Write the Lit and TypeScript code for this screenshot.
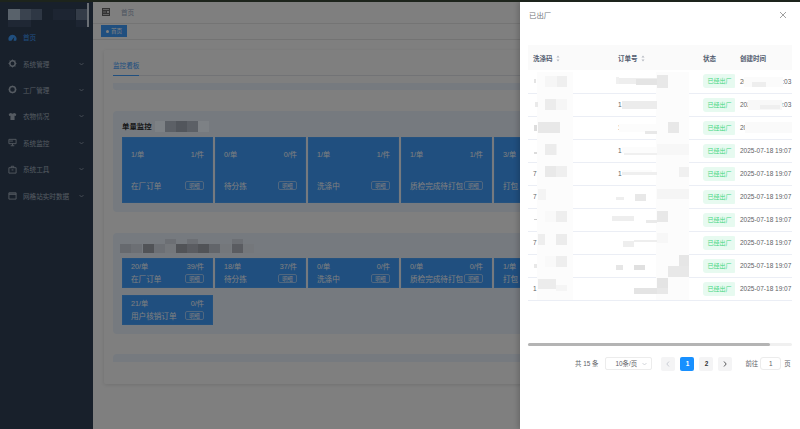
import { LitElement, html, css, svg } from "lit";
import { customElement } from "lit/decorators.js";

type Patch = [number, number, number, number, string];

const menu = [
  { label: "首页", icon: "home", active: true },
  { label: "系统管理", icon: "gear" },
  { label: "工厂管理", icon: "ring" },
  { label: "衣物情况", icon: "shirt" },
  { label: "系统监控", icon: "monitor" },
  { label: "系统工具", icon: "tool" },
  { label: "网格站实时数据", icon: "window" },
];

const topCards = [
  ["1/单", "1/件", "在厂订单"],
  ["0/单", "0/件", "待分拣"],
  ["1/单", "1/件", "洗涤中"],
  ["1/单", "1/件", "质检完成待打包"],
  ["3/单", "", "打包"],
];
const lowCards = [
  ["20/单", "39/件", "在厂订单"],
  ["18/单", "37/件", "待分拣"],
  ["0/单", "0/件", "洗涤中"],
  ["0/单", "0/件", "质检完成待打包"],
  ["1/单", "", "打包"],
  ["21/单", "0/件", "用户核销订单"],
];

const rows = [
  { a: "", b: "", t: "2025-07-18 19:03" },
  { a: "", b: "1", t: "2025-07-18 19:03" },
  { a: "", b: "1", t: "2025-07-18 19:07" },
  { a: "", b: "1", t: "2025-07-18 19:07" },
  { a: "7", b: "1", t: "2025-07-18 19:07" },
  { a: "7", b: "", t: "2025-07-18 19:07" },
  { a: "", b: "", t: "2025-07-18 19:07" },
  { a: "7", b: "", t: "2025-07-18 19:07" },
  { a: "", b: "", t: "2025-07-18 19:07" },
  { a: "1", b: "", t: "2025-07-18 19:07" },
];

const W = "#fcfcfc";
const patches: Patch[] = [
  // logo
  [8, 9, 12, 11, "#59626b"], [20, 9, 11, 11, "#3a434f"], [31, 9, 11, 11, "#2e3744"],
  [8, 20, 23, 7, "#1f2734"], [53, 9, 22, 11, "#1d2532"], [76, 9, 11, 11, "#343c48"], [76, 20, 11, 7, "#1d2532"],
  [87, 3, 2, 24, "#6a6f75"],
  // panel one heading
  [155, 121, 10, 11, "#7d8185"], [165, 121, 11, 11, "#5c6066"], [176, 121, 11, 11, "#52565c"],
  [187, 121, 11, 11, "#5c6066"], [198, 121, 11, 11, "#7d8185"],
  // panel two heading
  [120, 244, 11, 9, "#66696e"], [131, 244, 11, 9, "#6c6f74"], [143, 244, 11, 9, "#515357"],
  [154, 244, 11, 9, "#6c6f74"], [165, 244, 11, 9, "#74777b"], [165, 239, 11, 5, "#6c6f74"],
  [176, 244, 11, 9, "#515357"], [187, 244, 11, 9, "#5a5c61"], [187, 239, 11, 5, "#6c6f74"],
  [198, 244, 11, 9, "#515357"], [209, 244, 11, 9, "#62656a"], [220, 244, 11, 9, "#74777b"],
  [232, 244, 11, 9, "#5a5c61"], [232, 239, 11, 5, "#6c6f74"], [243, 244, 11, 9, "#74777b"],
  // drawer masks
  [537, 72, 36, 228, W], [656, 72, 33, 228, W],
  [545, 76, 12, 11, "#f6f6f6"], [557, 76, 10, 11, "#efefef"],
  [534, 79, 2, 4, "#e4e4e4"],
  [535, 102, 3, 5, "#eaeaea"],
  [545, 99, 11, 11, "#ececec"], [556, 99, 11, 11, "#f6f6f6"],
  [534, 125, 3, 6, "#dddddd"],
  [538, 122, 22, 11, "#e8e8e8"],
  [534, 152, 3, 2, "#dcdcdc"],
  [545, 144, 12, 11, "#f4f4f4"], [545, 144, 11, 11, "#ececec"],
  [545, 166, 11, 11, "#e9e9e9"], [556, 166, 11, 11, "#efefef"],
  [538, 189, 8, 11, "#f4f4f4"],
  [534, 219, 3, 1, "#cfcfcf"],
  [556, 211, 11, 11, "#eeeeee"], [545, 211, 11, 11, "#f9f9f9"],
  [538, 234, 7, 11, "#eeeeee"], [556, 234, 11, 11, "#ececec"],
  [534, 264, 3, 4, "#e8e8e8"],
  [556, 256, 11, 11, "#eeeeee"], [545, 256, 11, 11, "#f9f9f9"],
  [538, 279, 18, 10, "#ececec"], [556, 285, 11, 6, "#f5f5f5"],
  [616, 77, 3, 7, "#f0f0f0"], [619, 78, 38, 6, "#eeeeee"], [636, 79, 21, 6, "#e4e4e4"], [657, 75, 11, 13, "#e8e8e8"],
  [622, 101, 35, 8, "#ececec"], [619, 124, 38, 8, W], [645, 131, 12, 3, "#e8e8e8"], [668, 122, 11, 11, "#e8e8e8"],
  [622, 147, 35, 6, W], [624, 153, 33, 2, "#f0f0f0"], [657, 144, 32, 11, "#f7f7f7"],
  [622, 170, 30, 2, W], [622, 172, 35, 3, "#efefef"], [679, 167, 10, 10, "#f0f0f0"],
  [635, 194, 11, 7, "#e8e8e8"], [616, 197, 8, 3, "#eeeeee"], [657, 189, 32, 10, "#f5f5f5"],
  [612, 216, 22, 5, "#eeeeee"], [646, 220, 11, 3, "#eaeaea"], [657, 211, 11, 11, "#e8e8e8"],
  [623, 241, 11, 6, "#eeeeee"], [634, 240, 23, 2, "#eeeeee"], [657, 233, 11, 10, "#f7f7f7"],
  [616, 265, 7, 5, "#e6e6e6"], [634, 265, 11, 5, "#e0e0e0"], [679, 255, 10, 11, "#e6e6e6"], [668, 266, 21, 11, "#e8e8e8"],
  [634, 288, 23, 6, "#e4e4e4"], [657, 278, 11, 12, "#e4e4e4"], [657, 288, 11, 6, "#e8e8e8"],
  // obscured creation dates
  [744, 77, 39, 10, "#fbfbfb"], [752, 82, 14, 5, "#eeeeee"],
  [748, 100, 34, 10, "#f8f8f8"], [760, 105, 20, 4, "#efefef"],
  [745, 122, 47, 11, "#fafafa"],
];

function icon(name: string) {
  switch (name) {
    case "home":
      return svg`<path d="M1 8.500a4.500 4.500 0 1 1 8 0H6.200L7 4.500 4.600 7.600 3.800 8.500z" fill="currentColor"/>`;
    case "gear":
      return svg`<circle cx="5" cy="5" r="3" fill="none" stroke="currentColor" stroke-width="1.700"/><path d="M5 .6v1.400M5 8v1.400M.6 5H2M8 5h1.400M1.900 1.900l1 1M7.100 7.100l1 1M8.100 1.900l-1 1M2.900 7.100l-1 1" stroke="currentColor"/>`;
    case "ring":
      return svg`<circle cx="5" cy="5" r="3.400" fill="none" stroke="currentColor" stroke-width="1.700"/><path d="M5 .8v1M5 8.200v1M.8 5h1M8.200 5h1" stroke="currentColor"/>`;
    case "shirt":
      return svg`<path d="M3 1 .8 2.200l.6 2.200 1.300-.3V9h4.600V4.100l1.300.3.600-2.200L7 1 5 2z" fill="currentColor"/>`;
    case "monitor":
      return svg`<path d="M1 1.500h8v4.800H1z" fill="none" stroke="currentColor"/><path d="M5 6.300v2M3 8.600h4M1.500 3.400h4" stroke="currentColor"/>`;
    case "tool":
      return svg`<path d="M1 3h8v6H1zM3.600 3V1.400h2.800V3" fill="none" stroke="currentColor"/><path d="M4 5.500h2" stroke="currentColor"/>`;
    default:
      return svg`<path d="M1 2h8v7H1z" fill="none" stroke="currentColor"/><path d="M1 3.500h8" stroke="currentColor" stroke-width="1.400"/>`;
  }
}

@customElement("app-root")
export class AppRoot extends LitElement {
  static styles = css`
    :host {
      display: block;
      width: 800px;
      height: 429px;
      overflow: hidden;
      position: relative;
      font-family: "Liberation Sans", "Noto Sans CJK SC", sans-serif;
    }
    .root { display: flex; flex-direction: column; height: 429px; }
    .strip { height: 2px; flex: none; background: #1d241c; }
    .stage { position: relative; flex: 1; display: flex; min-height: 0; overflow: hidden; }

    .side { width: 93px; flex: none; background: #304156; color: #aab6c4; font-size: 6.6px; }
    .logo { height: 22px; }
    .item { height: 26.4px; display: flex; align-items: center; padding: 0 8px; gap: 6px; }
    .item.on { color: #409eff; }
    .item svg.ic { width: 9px; height: 9px; flex: none; }
    .item span { flex: 1; white-space: nowrap; }
    .item svg.ch { width: 5px; height: 4px; flex: none; margin-right: 1px; }

    .main { flex: 1; min-width: 0; background: #fff; display: flex; flex-direction: column; }
    .nav { height: 22px; flex: none; display: flex; align-items: center; padding: 0 0 1px 9px; gap: 11px; border-bottom: 1px solid #e8e8e8; box-sizing: border-box; font-size: 6.6px; color: #97a8be; }
    .nav svg { width: 8px; height: 8px; }
    .tags { height: 16px; flex: none; box-sizing: border-box; padding: 1px 0 0 8px; border-bottom: 1px solid #e6e6e6; }
    .tag { width: 26px; height: 12px; background: #409eff; color: #fff; font-size: 5.6px; display: flex; align-items: center; justify-content: center; gap: 2px; }
    .tag i { width: 3px; height: 3px; border-radius: 50%; background: #fff; }
    .card { margin: 10px 0 0 11px; height: 334px; box-sizing: border-box; padding: 10px 9px 0; background: #fff; box-shadow: 0 1px 4px rgba(0, 0, 0, 0.12); border-radius: 2px; width: 700px; overflow: hidden; }
    .tabs { height: 16px; display: flex; box-sizing: border-box; border-bottom: 1px solid #e4e7ed; }
    .tabs b { height: 16px; border-bottom: 1px solid #409eff; box-sizing: border-box; font-weight: 400; font-size: 6.6px; line-height: 12px; color: #409eff; }
    .bar { height: 7px; margin-top: 7px; background: #ecf5ff; border-radius: 0 0 3px 3px; }
    .panel { background: #ecf5ff; border-radius: 4px; box-sizing: border-box; padding: 0 9px 9px; }
    .p1 { margin-top: 21px; height: 101px; }
    .p2 { margin-top: 21px; height: 101px; }
    .p3 { margin-top: 20px; height: 8px; padding: 0; border-radius: 4px 4px 0 0; }
    .head { height: 26px; display: flex; align-items: center; padding-top: 2px; box-sizing: border-box; font-size: 7.4px; font-weight: 700; color: #303133; }
    .p2 .head { height: 25px; }
    .grid { display: grid; grid-template-columns: repeat(6, 91px); column-gap: 2px; row-gap: 7px; }
    .p1 .grid { grid-auto-rows: 66px; }
    .p2 .grid { grid-template-columns: repeat(5, 91px); grid-auto-rows: 30px; }
    .c { background: #409eff; color: #fff; padding: 0 8px; box-sizing: border-box; display: flex; flex-direction: column; justify-content: space-between; border: 1px solid #4aa5ff; overflow: hidden; }
    .p1 .c { padding-top: 11px; padding-bottom: 11px; }
    .p2 .c { padding-top: 2px; padding-bottom: 3px; }
    .r { display: flex; justify-content: space-between; align-items: center; white-space: nowrap; }
    .r1 { font-size: 7.2px; }
    .r2 { font-size: 7.6px; }
    .r2 em { font-style: normal; font-size: 5.2px; width: 19px; height: 9px; flex: none; border: 1px solid #a0cfff; border-radius: 2px; box-sizing: border-box; display: flex; align-items: center; justify-content: center; }

    .veil { position: absolute; inset: 0; background: rgba(0, 0, 0, 0.5); }
    .drawer { position: absolute; top: 0; bottom: 0; right: 0; width: 280px; background: #fff; box-shadow: -2px 0 5px rgba(0, 0, 0, 0.18); display: flex; flex-direction: column; padding: 0 8px; box-sizing: border-box; }
    .dt { height: 43px; flex: none; display: flex; justify-content: space-between; padding: 9px 5px 0 1px; box-sizing: border-box; color: #72767b; font-size: 7.4px; line-height: 10px; }
    .dt svg { width: 8px; height: 8px; }
    .tw { width: 264px; overflow: hidden; flex: none; }
    table { border-collapse: collapse; table-layout: fixed; width: 288px; font-size: 6.5px; color: #606266; }
    col.w85 { width: 85px; }
    col.w37 { width: 37px; }
    col.w81 { width: 81px; }
    th { height: 25px; padding: 0 0 0 5px; background: #fafafa; color: #515a6e; font-weight: 700; text-align: left; white-space: nowrap; }
    th svg { width: 4px; height: 7px; margin-left: 3px; vertical-align: middle; }
    td { height: 23px; box-sizing: border-box; padding: 0 0 0 5px; border-bottom: 1px solid #ebeef5; white-space: nowrap; overflow: hidden; }
    td.dc { padding-left: 0; }
    .st { display: block; width: 33px; height: 14px; background: #e7faf0; border-radius: 3px; box-sizing: border-box; color: #3fd67f; font-size: 6px; line-height: 14px; text-align: center; }
    .sb { flex: none; margin-top: 42px; width: 264px; height: 3px; background: #f0f0f0; border-radius: 2px; }
    .sb i { display: block; width: 242px; height: 3px; background: #b4b4b4; border-radius: 2px; }
    .pg { flex: none; margin-top: 11px; display: flex; align-items: center; font-size: 6.4px; color: #606266; height: 14px; padding-left: 47px; }
    .sel { margin-left: 7px; width: 47px; height: 13px; border: 1px solid #ececec; border-radius: 2px; box-sizing: border-box; display: flex; align-items: center; padding: 0 4px 0 9px; justify-content: space-between; }
    .sel svg { width: 5px; height: 4px; }
    .pb { width: 14px; height: 14px; margin-left: 5px; background: #f4f4f5; border-radius: 2px; display: flex; align-items: center; justify-content: center; font-weight: 700; color: #303133; }
    .pb svg { width: 4px; height: 6px; }
    .pb.on { background: #1890ff; color: #fff; }
    .pb.off { color: #c0c4cc; margin-left: 9px; }
    .go { margin-left: 13px; }
    .inp { margin: 0 3px 0 2px; width: 21px; height: 13px; border: 1px solid #ececec; border-radius: 3px; box-sizing: border-box; display: flex; align-items: center; justify-content: center; }

    .mask { position: absolute; left: 0; top: 0; width: 800px; height: 429px; pointer-events: none; }
  `;

  private chev() {
    return html`<svg class="ch" viewBox="0 0 5 4"><path d="M.5 1 2.500 3 4.500 1" fill="none" stroke="currentColor" stroke-width=".7"/></svg>`;
  }

  private sort() {
    return html`<svg viewBox="0 0 4 7"><path d="M2 .5 3.500 2.500H.5zM2 6.500 .5 4.500h3z" fill="#b5b9c2"/></svg>`;
  }

  private cell(c: string[]) {
    return html`<div class="c">
      <div class="r r1"><span>${c[0]}</span><span>${c[1]}</span></div>
      <div class="r r2"><span>${c[2]}</span><em>明细</em></div>
    </div>`;
  }

  render() {
    return html`
      <div class="root">
        <div class="strip"></div>
        <div class="stage">
          <aside class="side">
            <div class="logo"></div>
            ${menu.map(
              (m) => html`<div class="item ${m.active ? "on" : ""}">
                <svg class="ic" viewBox="0 0 10 10">${icon(m.icon)}</svg>
                <span>${m.label}</span>
                ${m.active ? "" : this.chev()}
              </div>`
            )}
          </aside>
          <main class="main">
            <div class="nav">
              <svg viewBox="0 0 8 8"><path d="M0 0h8v8H0z" fill="#666"/><path d="M1 1.500h6M1 6.500h6M1 4h3" stroke="#ddd" stroke-width=".8"/><circle cx="6" cy="4" r="1" fill="#fff"/></svg>
              <span>首页</span>
            </div>
            <div class="tags"><div class="tag"><i></i>首页</div></div>
            <section class="card">
              <div class="tabs"><b>监控看板</b></div>
              <div class="bar"></div>
              <div class="panel p1">
                <div class="head">单量监控</div>
                <div class="grid">${topCards.map((c) => this.cell(c))}</div>
              </div>
              <div class="panel p2">
                <div class="head"></div>
                <div class="grid">${lowCards.map((c) => this.cell(c))}</div>
              </div>
              <div class="panel p3"></div>
            </section>
          </main>
          <div class="veil"></div>
          <div class="drawer">
            <div class="dt">
              <span>已出厂</span>
              <svg viewBox="0 0 8 8"><path d="M1 1l6 6M7 1 1 7" stroke="#777" stroke-width=".7"/></svg>
            </div>
            <div class="tw">
              <table>
                <colgroup><col class="w85" /><col class="w85" /><col class="w37" /><col class="w81" /></colgroup>
                <thead>
                  <tr>
                    <th>洗涤码${this.sort()}</th>
                    <th>订单号${this.sort()}</th>
                    <th>状态</th>
                    <th>创建时间</th>
                  </tr>
                </thead>
                <tbody>
                  ${rows.map(
                    (r) => html`<tr>
                      <td>${r.a}</td>
                      <td>${r.b}</td>
                      <td><span class="st">已经出厂</span></td>
                      <td>${r.t}</td>
                    </tr>`
                  )}
                </tbody>
              </table>
            </div>
            <div class="sb"><i></i></div>
            <div class="pg">
              <span>共 15 条</span>
              <div class="sel"><span>10条/页</span><svg viewBox="0 0 5 4"><path d="M.5 1 2.500 3 4.500 1" fill="none" stroke="#c0c4cc" stroke-width=".7"/></svg></div>
              <div class="pb off"><svg viewBox="0 0 4 6"><path d="M3 .5.800 3 3 5.500" fill="none" stroke="currentColor" stroke-width=".8"/></svg></div>
              <div class="pb on">1</div>
              <div class="pb">2</div>
              <div class="pb"><svg viewBox="0 0 4 6"><path d="M1 .5 3.200 3 1 5.500" fill="none" stroke="currentColor" stroke-width=".8"/></svg></div>
              <span class="go">前往</span>
              <div class="inp">1</div>
              <span>页</span>
            </div>
          </div>
        </div>
      </div>
      <svg class="mask" viewBox="0 0 800 429">
        ${patches.map((p) => svg`<rect x=${p[0]} y=${p[1]} width=${p[2]} height=${p[3]} fill=${p[4]} />`)}
      </svg>
    `;
  }
}
